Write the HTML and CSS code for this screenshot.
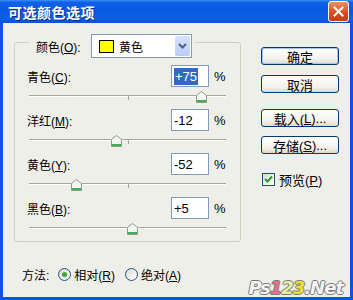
FILE: index.html
```html
<!DOCTYPE html>
<html lang="zh-CN">
<head>
    <meta charset="UTF-8">
    <title>可选颜色选项</title>
    <link rel="stylesheet" href="styles.css">
</head>
<body>
    <div class="window">
        <div class="titlebar">
            <span class="title">可选颜色选项</span>
            <span class="close">
                <svg width="11" height="11" viewBox="0 0 11 11"><path d="M1.5 1.5 L9.5 9.5 M9.5 1.5 L1.5 9.5" stroke="#fff" stroke-width="2" stroke-linecap="square"/></svg>
            </span>
        </div>
        <div class="client">
            <div class="main">
                <div class="group">
                    <div class="group-head">
                        <span class="head-label">颜色(<u>O</u>):</span>
                        <div class="select">
                            <span class="swatch"></span>
                            <span class="select-text">黄色</span>
                            <span class="select-btn">
                                <svg width="9" height="6" viewBox="0 0 9 6"><path d="M1 1 L4.5 4.5 L8 1" fill="none" stroke="#4d6185" stroke-width="2"/></svg>
                            </span>
                        </div>
                    </div>

                    <div class="adj">
                        <div class="adj-line">
                            <span class="adj-label">青色(<u>C</u>):</span>
                            <span class="field"><span class="hl">+75</span></span>
                            <span class="pct">%</span>
                        </div>
                        <div class="slider">
                            <span class="track"></span>
                            <span class="tick"></span>
                            <svg class="thumb" style="left: 87.5%" width="11" height="12" viewBox="0 0 11 12"><path d="M0.5 11.5 V4.5 L5.5 0.5 L10.5 4.5 V11.5 Z" fill="#f4f6f2" stroke="#8d9a8c"/><path d="M1 9 H10 V11 H1 Z" fill="#3fae55"/></svg>
                        </div>
                    </div>

                    <div class="adj">
                        <div class="adj-line">
                            <span class="adj-label">洋红(<u>M</u>):</span>
                            <span class="field">-12</span>
                            <span class="pct">%</span>
                        </div>
                        <div class="slider">
                            <span class="track"></span>
                            <span class="tick"></span>
                            <svg class="thumb" style="left: 44%" width="11" height="12" viewBox="0 0 11 12"><path d="M0.5 11.5 V4.5 L5.5 0.5 L10.5 4.5 V11.5 Z" fill="#f4f6f2" stroke="#8d9a8c"/><path d="M1 9 H10 V11 H1 Z" fill="#3fae55"/></svg>
                        </div>
                    </div>

                    <div class="adj">
                        <div class="adj-line">
                            <span class="adj-label">黄色(<u>Y</u>):</span>
                            <span class="field">-52</span>
                            <span class="pct">%</span>
                        </div>
                        <div class="slider">
                            <span class="track"></span>
                            <span class="tick"></span>
                            <svg class="thumb" style="left: 24%" width="11" height="12" viewBox="0 0 11 12"><path d="M0.5 11.5 V4.5 L5.5 0.5 L10.5 4.5 V11.5 Z" fill="#f4f6f2" stroke="#8d9a8c"/><path d="M1 9 H10 V11 H1 Z" fill="#3fae55"/></svg>
                        </div>
                    </div>

                    <div class="adj">
                        <div class="adj-line">
                            <span class="adj-label">黑色(<u>B</u>):</span>
                            <span class="field">+5</span>
                            <span class="pct">%</span>
                        </div>
                        <div class="slider">
                            <span class="track"></span>
                            <span class="tick"></span>
                            <svg class="thumb" style="left: 52.5%" width="11" height="12" viewBox="0 0 11 12"><path d="M0.5 11.5 V4.5 L5.5 0.5 L10.5 4.5 V11.5 Z" fill="#f4f6f2" stroke="#8d9a8c"/><path d="M1 9 H10 V11 H1 Z" fill="#3fae55"/></svg>
                        </div>
                    </div>
                </div>

                <div class="side">
                    <div class="btn default">确定</div>
                    <div class="btn">取消</div>
                    <div class="btn gap">载入(<u>L</u>)...</div>
                    <div class="btn">存储(<u>S</u>)...</div>
                    <div class="check">
                        <span class="box">
                            <svg width="9" height="9" viewBox="0 0 9 9"><path d="M1 4 L3.5 6.5 L8 1.5" fill="none" stroke="#21a121" stroke-width="2"/></svg>
                        </span>
                        <span>预览(<u>P</u>)</span>
                    </div>
                </div>
            </div>

            <div class="method">
                <span class="method-label">方法:</span>
                <span class="radio on"></span>
                <span class="radio-text">相对(<u>R</u>)</span>
                <span class="radio"></span>
                <span class="radio-text">绝对(<u>A</u>)</span>
            </div>
        </div>

        <div class="watermark">Ps<span class="one">1</span><span class="two">2</span><span class="three">3</span>.Net</div>
    </div>
</body>
</html>
```

FILE: styles.css
```css
body {
    margin: 0;
    font-family: "Liberation Sans", "Noto Sans CJK SC", sans-serif;
    font-size: 12px;
    color: #000;
    background: #ffffff;
}

.window {
    position: relative;
    width: 353px;
    height: 300px;
    display: flex;
    flex-direction: column;
    overflow: hidden;
}

/* Title bar */
.titlebar {
    height: 23px;
    display: flex;
    align-items: center;
    justify-content: space-between;
    padding: 0 4px 0 8px;
    background: linear-gradient(to bottom, #3d8ff6 0%, #0f63e8 10%, #0a58e0 45%, #0c5fe9 85%, #0a4fd2 100%);
}

.title {
    color: #fff;
    font-family: "Noto Sans CJK SC", sans-serif;
    font-weight: bold;
    font-size: 14px;
    letter-spacing: 0.5px;
    text-shadow: 1px 1px 0 #0a2f8c;
}

.close {
    width: 19px;
    height: 19px;
    border: 1px solid #fff;
    border-radius: 3px;
    background: linear-gradient(to bottom, #ea8f66, #d9481f 60%, #c83c18);
    display: flex;
    align-items: center;
    justify-content: center;
}

/* Dialog body */
.client {
    flex: 1;
    background: #efefea;
    border: 3px solid #0a55dc;
    border-top: none;
    padding: 19px 11px 0 11px;
}

.main {
    display: flex;
    align-items: flex-start;
}

.group {
    width: 225px;
    border: 1px solid #d0d0bf;
    border-radius: 3px;
}

.group-head {
    display: flex;
    align-items: center;
    width: fit-content;
    margin: -9px 0 0 14px;
    padding: 0 3px 0 7px;
    background: #efefea;
}

.head-label {
    width: 55px;
}

.select {
    width: 99px;
    height: 22px;
    border: 1px solid #7f9db9;
    background: #fff;
    display: flex;
    align-items: center;
}

.swatch {
    width: 13px;
    height: 11px;
    margin-left: 7px;
    background: #ffff00;
    border: 1px solid #000;
}

.select-text {
    flex: 1;
    margin-left: 5px;
}

.select-btn {
    width: 15px;
    height: 20px;
    margin-right: 1px;
    border-radius: 2px;
    background: linear-gradient(to bottom, #d6e2fc, #b9cdf8);
    display: flex;
    align-items: center;
    justify-content: center;
}

/* Adjustment rows */
.adj {
    padding: 0 13px 0 12px;
}

.group-head + .adj {
    margin-top: 7px;
}

.adj-line {
    height: 22px;
    display: flex;
    align-items: center;
}

.adj-label {
    flex: 1;
}

.field {
    width: 34px;
    height: 20px;
    border: 1px solid #7f9db9;
    background: #fff;
    padding-left: 2px;
    display: flex;
    align-items: center;
    font-size: 13px;
}

.hl {
    background: #316ac5;
    color: #fff;
    padding: 0 1px;
    line-height: 17px;
}

.pct {
    width: 13px;
    margin-left: 5px;
    font-size: 13px;
}

.slider {
    position: relative;
    height: 22px;
    margin: 0 1px 0 2px;
}

.track {
    display: block;
    position: absolute;
    left: 0;
    right: 0;
    top: 8px;
    height: 1px;
    background: #a7a69c;
    border-bottom: 1px solid #fff;
}

.tick {
    position: absolute;
    left: 50%;
    top: 9px;
    width: 1px;
    height: 4px;
    background: #a7a69c;
}

.thumb {
    position: absolute;
    top: 4px;
    margin-left: -5px;
}

/* Right column */
.side {
    margin: 5px 0 0 20px;
    display: flex;
    flex-direction: column;
}

.btn {
    width: 76px;
    height: 16px;
    margin-bottom: 9px;
    border: 1px solid #003c74;
    border-radius: 3px;
    background: linear-gradient(to bottom, #ffffff, #f2f1ec 70%, #dcd8cc);
    display: flex;
    align-items: center;
    justify-content: center;
    font-size: 13px;
}

.btn.default {
    box-shadow: inset 0 0 0 1px #a9c5f4;
    margin-bottom: 10px;
}

.btn.gap {
    margin-top: 7px;
}

.check {
    margin: 7px 0 0 1px;
    display: flex;
    align-items: center;
    font-size: 13px;
}

.box {
    width: 11px;
    height: 11px;
    border: 1px solid #1c5180;
    background: linear-gradient(to bottom right, #dcdbd5, #fff);
    margin-right: 4px;
    display: flex;
    align-items: center;
    justify-content: center;
}

/* Method row */
.method {
    margin-top: 24px;
    padding-left: 8px;
    display: flex;
    align-items: center;
    font-size: 12px;
    white-space: nowrap;
}

.method-label {
    margin-right: 9px;
}

.radio {
    width: 11px;
    height: 11px;
    border: 1px solid #1c5180;
    border-radius: 50%;
    background: linear-gradient(to bottom right, #dcdbd5, #fff);
    display: flex;
    align-items: center;
    justify-content: center;
    margin-right: 3px;
}

.radio.on::after {
    content: "";
    width: 5px;
    height: 5px;
    border-radius: 50%;
    background: #3aa83a;
}

.radio-text {
    margin-right: 10px;
}

/* Watermark over the corner */
.watermark {
    position: absolute;
    right: 10px;
    bottom: 2px;
    font-family: "DejaVu Sans", sans-serif;
    font-weight: bold;
    font-style: italic;
    font-size: 18px;
    letter-spacing: -1px;
    color: #f4f4f4;
    text-shadow: 1px 0 0 #7a7a7a, -1px 0 0 #7a7a7a, 0 1px 0 #7a7a7a, 0 -1px 0 #7a7a7a;
}

.watermark .one { color: #e8708a; }
.watermark .two { color: #e8f0a0; }
.watermark .three { color: #f0e030; }
```
